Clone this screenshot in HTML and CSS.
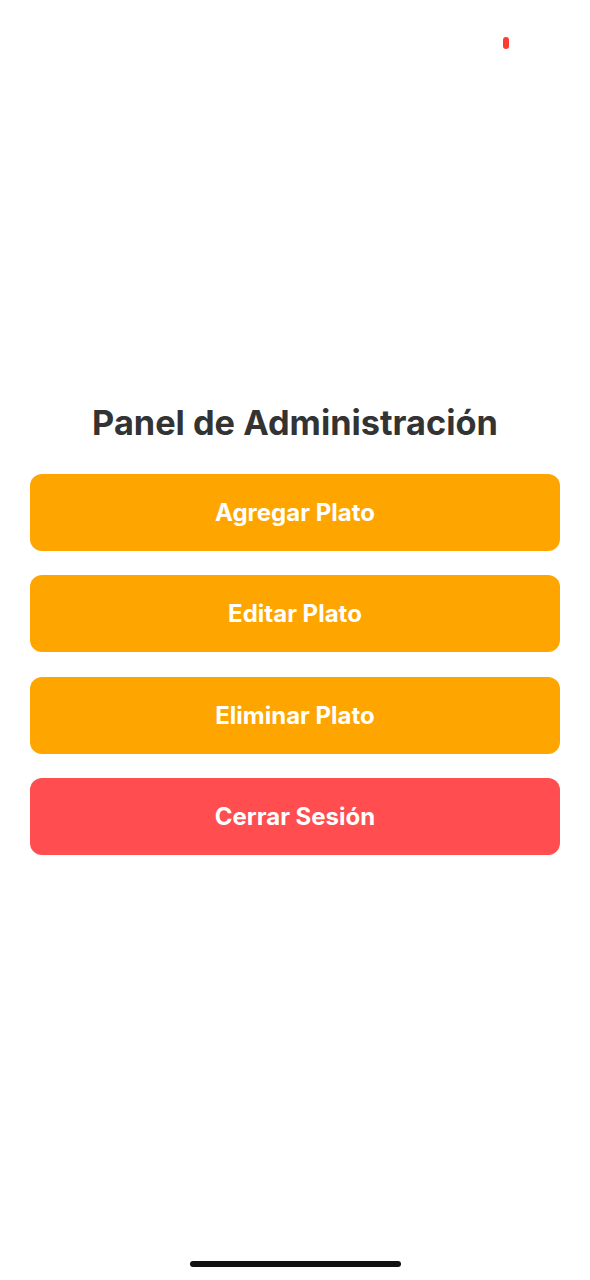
FILE: index.html
```html
<!DOCTYPE html>
<html lang="es">
<head>
<meta charset="utf-8">
<title>Panel de Administración</title>
<link rel="stylesheet" href="styles.css">
</head>
<body>
<div class="screen">
  <div class="status">
    <span class="rec-dot"></span>
  </div>
  <main class="content">
    <h1 class="title">Panel de Administración</h1>
    <div class="actions">
      <button class="btn btn-primary">Agregar Plato</button>
      <button class="btn btn-primary">Editar Plato</button>
      <button class="btn btn-primary">Eliminar Plato</button>
      <button class="btn btn-danger">Cerrar Sesión</button>
    </div>
  </main>
  <div class="home-bar"><span class="home-indicator"></span></div>
</div>
</body>
</html>
```

FILE: styles.css
```css
* { box-sizing: border-box; }
html, body { margin: 0; padding: 0; background: #ffffff; }
body { font-family: Inter, "Noto Sans", "Liberation Sans", sans-serif; }

.screen {
  width: 590px;
  height: 1280px;
  display: flex;
  flex-direction: column;
  background: #ffffff;
}

.status {
  height: 60px;
  display: flex;
  justify-content: flex-end;
  padding-top: 37px;
  padding-right: 81px;
}
.rec-dot {
  width: 6px;
  height: 12px;
  border-radius: 3px;
  background: #ff3b30;
}

.content {
  flex: 1;
  padding: 343px 30px 0;
  display: flex;
  flex-direction: column;
}

.title {
  margin: 0 0 31px;
  text-align: center;
  font-size: 34.3px;
  line-height: 40px;
  font-weight: 700;
  color: #333333;
}

.actions {
  display: flex;
  flex-direction: column;
  gap: 24.3px;
}

.btn {
  height: 77px;
  width: 100%;
  border: none;
  border-radius: 12px;
  color: #ffffff;
  font-family: Inter, "Noto Sans", "Liberation Sans", sans-serif;
  font-size: 24px;
  font-weight: 700;
  cursor: pointer;
}
.btn-primary { background: #ffa500; }
.btn-danger { background: #ff4d50; }

.home-bar {
  height: 30px;
  display: flex;
  justify-content: center;
}
.home-indicator {
  margin-top: 11px;
  width: 211px;
  height: 6px;
  border-radius: 3px;
  background: #111111;
}
```
